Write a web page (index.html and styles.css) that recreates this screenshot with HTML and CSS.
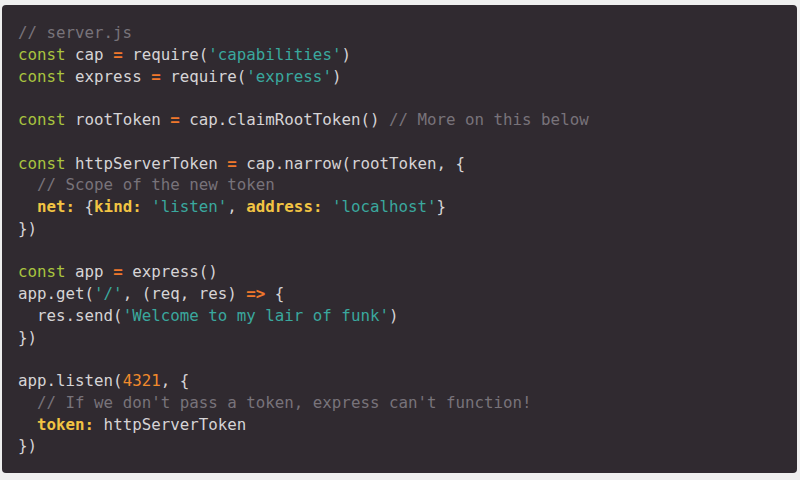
FILE: index.html
```html
<!DOCTYPE html>
<html>
<head>
<meta charset="utf-8">
<link rel="stylesheet" href="styles.css">
</head>
<body>
<div class="frame">
  <div class="code">
    <div class="ln"><span class="c">// server.js</span></div>
    <div class="ln"><span class="k">const</span> cap <span class="o">=</span> require(<span class="s">'capabilities'</span>)</div>
    <div class="ln"><span class="k">const</span> express <span class="o">=</span> require(<span class="s">'express'</span>)</div>
    <div class="ln"> </div>
    <div class="ln"><span class="k">const</span> rootToken <span class="o">=</span> cap.claimRootToken() <span class="c">// More on this below</span></div>
    <div class="ln"> </div>
    <div class="ln"><span class="k">const</span> httpServerToken <span class="o">=</span> cap.narrow(rootToken, {</div>
    <div class="ln">  <span class="c">// Scope of the new token</span></div>
    <div class="ln">  <span class="p">net:</span> {<span class="p">kind:</span> <span class="s">'listen'</span>, <span class="p">address:</span> <span class="s">'localhost'</span>}</div>
    <div class="ln">})</div>
    <div class="ln"> </div>
    <div class="ln"><span class="k">const</span> app <span class="o">=</span> express()</div>
    <div class="ln">app.get(<span class="s">'/'</span>, (req, res) <span class="o">=&gt;</span> {</div>
    <div class="ln">  res.send(<span class="s">'Welcome to my lair of funk'</span>)</div>
    <div class="ln">})</div>
    <div class="ln"> </div>
    <div class="ln">app.listen(<span class="n">4321</span>, {</div>
    <div class="ln">  <span class="c">// If we don't pass a token, express can't function!</span></div>
    <div class="ln">  <span class="p">token:</span> httpServerToken</div>
    <div class="ln">})</div>
  </div>
</div>
</body>
</html>
```
FILE: styles.css
```css
html, body {
  margin: 0;
  padding: 0;
  background: #efefef;
  width: 800px;
  height: 480px;
  overflow: hidden;
}
.frame {
  margin: 5px 3px 0 2px;
  height: 468px;
  background: #302a30;
  border-radius: 4px;
  box-sizing: border-box;
  padding: 17px 16px 0 16px;
}
.code {
  font-family: "DejaVu Sans Mono", monospace;
  font-size: 15.8px;
  color: #d6d4d6;
}
.ln {
  height: 21.75px;
  line-height: 21.75px;
  white-space: pre;
}
.c { color: #78737a; }
.k { color: #a9c43f; }
.s { color: #3aa89e; }
.o { color: #f0782c; font-weight: bold; }
.p { color: #f2c443; font-weight: bold; }
.n { color: #f08a2c; }
```
